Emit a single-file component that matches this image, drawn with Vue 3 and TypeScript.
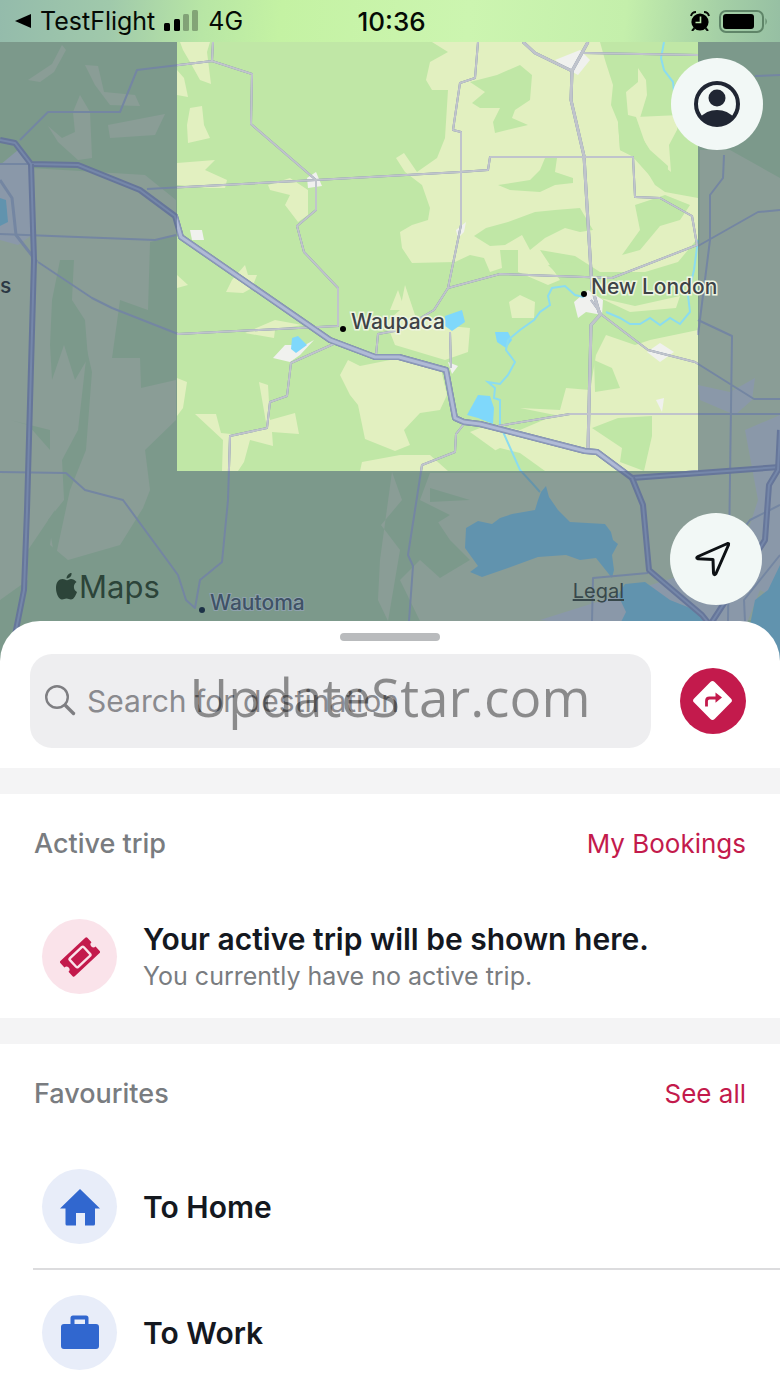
<script setup lang="ts">
type Road = { d: string; w: number; motorway?: boolean }

const green = [
  '470,82 497,75 520,65 532,75 530,100 515,110 512,118 528,125 495,133 493,122 500,108 480,108 472,103 485,92',
  '498,185 530,180 540,170 545,158 557,158 555,172 573,178 573,183 555,185 540,192 510,190',
  '486,228 508,222 535,212 555,210 580,208 593,230 580,232 565,228 545,238 530,250 522,235 505,245 490,246 474,236',
  '635,205 665,195 690,205 680,220 660,226 640,250 622,255 640,230',
  '548,265 580,262 585,275 560,277',
  '618,122 632,122 650,150 668,166 667,192 650,176 632,156 620,150',
]

const yellow = [
  '180,42 210,42 207,52 211,84 200,80 190,62 183,50',
  '177,70 184,78 188,97 177,95',
  '190,108 202,106 204,125 210,138 188,143 187,125',
  '177,163 215,160 205,170 227,180 225,188 210,188 177,185',
  '268,185 290,178 308,190 308,215 298,222 285,205 290,195 270,190',
  '177,275 188,285 177,288',
  '226,292 232,280 245,265 248,275 257,275 252,288 243,293',
  '390,310 398,290 405,310',
  '245,333 275,320 302,325 275,330 274,338',
  '177,378 187,382 183,408 177,416',
  '195,414 216,414 221,433 240,435 267,428 259,382 268,385 270,420 295,413 299,434 272,432 273,446 250,440 244,462 238,471 222,471 223,440',
  '432,42 600,42 605,60 613,85 611,105 618,122 620,150 640,160 655,185 665,192 698,198 698,238 678,262 645,272 600,272 575,256 540,250 560,280 548,285 518,272 518,250 500,250 502,268 490,272 484,258 470,255 455,262 412,263 402,248 400,232 412,225 428,220 430,208 422,185 405,172 396,158 404,153 417,172 437,158 445,138 448,90 432,90 426,80 430,62 448,52',
  '638,68 646,80 647,95 640,118 628,115 626,92 638,82',
  '636,117 680,115 677,130 669,145 671,172 650,155 644,140',
  '386,322 400,310 405,285 415,315 440,325 470,328 468,352 445,360 395,345',
  '348,360 360,366 400,358 440,365 447,395 440,410 420,413 404,430 410,445 395,451 365,439 358,405 350,395 340,375',
  '362,462 400,455 430,455 448,471 360,471',
  '470,432 490,424 520,430 555,415 520,408 560,410 566,388 590,390 596,355 606,335 635,345 650,340 698,330 698,471 510,471 495,450',
  '509,302 520,295 535,302 534,318 512,318',
  '600,298 635,306 680,296 676,308 630,312',
]

const greenOver = [
  '594,360 612,368 620,388 595,392',
  '592,428 618,418 652,416 652,436 644,471 620,462 622,448',
  '480,458 500,448 520,453 545,471 470,471',
]

const meadow = [
  '48,126 58,142 78,160 92,158 90,112 80,95 73,112 75,132 62,138',
  '28,80 52,64 62,45 66,50 54,72 40,82',
  '85,65 98,66 104,92 135,95 140,106 110,105 95,85',
  '108,125 165,114 155,135 110,138',
  '30,168 145,175 176,200 176,235 150,242 148,310 120,300 112,358 140,358 141,388 176,380 176,420 145,450 150,490 143,508 120,545 68,560 50,545 55,510 28,550 28,580 0,600 0,235 32,235',
  '700,150 730,150 780,178 780,620 590,621 520,621 420,621 400,580 410,540 450,515 420,500 430,473 698,473',
  '392,472 402,500 381,525 400,550 388,621 378,600 380,560',
]

const meadowGreen = [
  '60,260 74,260 72,300 85,320 88,358 75,380 64,345 52,380 50,345 52,300',
  '87,350 92,372 86,450 70,490 55,560 48,520 64,500 62,460 78,430',
  '10,420 50,430 50,450 28,425',
  '430,488 470,500 430,502',
  '400,520 430,510 450,540 470,560 440,578 420,560 400,580',
]

const city = [
  '0,165 18,150 30,165 32,235 18,245 0,240',
  '698,385 730,392 755,378 752,400 735,415 700,400',
  '745,430 780,415 780,600 750,585 745,540 758,500',
  '540,620 730,560 760,590 740,640 700,640',
]

const town = [
  '190,230 202,230 204,240 192,240',
  '307,178 316,172 322,186 308,188',
  '273,358 285,345 305,345 314,340 300,355 290,362',
  '555,60 580,50 590,60 578,75 565,68',
  '456,230 466,222 464,232 458,238',
  '574,302 588,290 603,300 602,315 586,312 578,318',
  '647,352 660,343 674,352 660,362',
  '448,362 458,366 452,374',
  '656,400 664,398 662,412',
]

const water = [
  '292,338 298,336 307,345 296,353 291,349',
  '445,316 462,310 465,322 452,331 445,326',
  '495,332 508,332 512,340 506,348 497,342',
  '467,415 478,395 490,396 494,408 493,424 478,418',
  '466,528 478,521 492,524 500,518 512,514 535,510 538,500 541,492 546,486 549,497 558,510 570,522 605,524 611,532 613,540 618,544 612,555 614,570 612,578 596,558 580,560 566,555 538,557 508,568 482,577 470,572 478,566 465,548',
  '618,595 625,584 645,582 670,600 700,612 712,640 612,640 626,612',
  '780,565 768,590 755,600 750,625 780,660',
  '0,198 6,200 8,222 0,226',
]

const streams = [
  'M664 42L661 58L664 70L673 82L674 92M698 240L694 270L688 295L690 312L680 324L670 318L660 325L650 318L640 324L630 324L620 318L606 312',
  'M584 297L575 295L565 286L552 288L548 296L550 305L540 312L534 320L520 330L508 340L506 350L515 362L508 375L500 384L488 382L495 388L494 398L500 400L500 425L512 452L520 470L532 483L540 492',
]

const roads: Road[] = [
  { w: 2, d: 'M20 140L48 112L120 112L137 70L212 61L213 42M212 61L252 74L251 124L316 180L316 210L297 226L304 252L338 288L338 326L178 334L112 308L92 298L38 262' },
  { w: 2, d: 'M147 189L316 180L460 172L488 170L490 157L633 157L635 197L660 198L692 216L697 245L612 278L500 274L448 288L434 310L400 330L378 334L376 355' },
  { w: 2, d: 'M478 42L475 78L460 83L453 130L461 132L461 225L448 288' },
  { w: 2, d: 'M0 234L155 240L176 235M0 164L30 164' },
  { w: 3, d: 'M0 180L12 198L16 235L37 262' },
  { w: 2, d: 'M584 53L698 55M755 76L780 75' },
  { w: 2, d: 'M338 342L291 363L287 396L270 402L267 428L230 436L228 500L222 562L200 580L195 608L186 600L178 575L123 500L85 490L66 473L0 472' },
  { w: 3, d: 'M523 42L535 53L572 71L588 42M572 71L571 100L584 156L592 288L600 315L591 325L588 448' },
  { w: 2, d: 'M591 300L602 315L648 350L695 362L754 399L780 399M698 320L732 336L728 621' },
  { w: 2, d: 'M450 332L451 368M498 426L570 414L780 414M464 424L456 434L455 452L422 465L408 555L413 566L409 621' },
  { w: 2, d: 'M724 155L723 178L710 195L710 240L698 335M698 246L758 212L780 210' },
  { w: 2, d: 'M592 621L593 578L648 573M780 505L750 520L735 540M745 621L744 600L780 555' },
  { w: 6, motorway: true, d: 'M0 140L15 143L31 164L78 165L140 190L175 216L181 237L330 340L375 357L399 357L446 370L455 418L464 422L480 424L585 451L597 452L632 478L780 467' },
  { w: 6, motorway: true, d: 'M31 164L34 260L27 510L24 590L14 640M632 478L643 505L649 570L702 615L710 625L765 540L769 485L778 470L780 430' },
]

const favourites = [
  { label: 'To Home', icon: 'home' },
  { label: 'To Work', icon: 'work' },
]
</script>

<template>
  <div class="screen">
    <header class="status">
      <div class="carrier">
        <svg class="back" viewBox="0 0 16 16" aria-hidden="true"><path d="M0 8L16 1V15Z" /></svg>
        <span>TestFlight</span>
        <svg class="signal" viewBox="0 0 35 22" aria-hidden="true">
          <rect x="0" y="13" width="6" height="8" rx="1.5" />
          <rect x="10" y="9" width="6" height="12" rx="1.5" />
          <rect x="19" y="4" width="6" height="17" rx="1.5" opacity=".28" />
          <rect x="28" y="0" width="6" height="21" rx="1.5" opacity=".28" />
        </svg>
        <span>4G</span>
      </div>
      <time class="clock">10:36</time>
      <div class="indicators">
        <svg class="alarm" viewBox="0 0 20 20" aria-hidden="true">
          <circle cx="10" cy="11" r="8.6" />
          <path d="M1 5Q2 1 6 1M14 1Q18 1 19 5M4.500 17L2 20M15.500 17L18 20" fill="none" stroke="#050a05" stroke-width="2" />
          <path d="M10.500 5.500V11.500H5.500" fill="none" stroke="#b9e4a9" stroke-width="1.600" />
        </svg>
        <svg class="battery" viewBox="0 0 49 23" aria-hidden="true">
          <rect x="1" y="1" width="43" height="21" rx="6" fill="none" stroke="#5f8568" stroke-width="2" />
          <rect x="4" y="4" width="31" height="15" rx="3" />
          <path d="M46.500 8Q49 11.500 46.500 15Z" fill="#5f8568" />
        </svg>
      </div>
    </header>

    <section class="map" aria-label="Map">
      <svg class="tiles" viewBox="0 42 780 624" aria-hidden="true">
        <defs>
          <clipPath id="focus"><rect x="177" y="42" width="521" height="429" /></clipPath>
        </defs>
        <rect y="42" width="780" height="624" fill="#c0e7a6" />
        <g fill="#e2f0c0"><polygon v-for="p in meadow" :key="p" :points="p" /></g>
        <g fill="#c0e7a6"><polygon v-for="p in meadowGreen" :key="p" :points="p" /></g>
        <g clip-path="url(#focus)">
          <rect x="177" y="42" width="521" height="429" fill="#c0e7a6" />
          <g fill="#e2f0c0"><polygon v-for="p in yellow" :key="p" :points="p" /></g>
          <g fill="#c0e7a6">
            <polygon v-for="p in green" :key="p" :points="p" />
            <polygon v-for="p in greenOver" :key="p" :points="p" />
          </g>
          <g fill="#f0f1ee"><polygon v-for="p in town" :key="p" :points="p" /></g>
        </g>
        <g fill="#e2e5ed"><polygon v-for="p in city" :key="p" :points="p" /></g>
        <g fill="#7fd8fb"><polygon v-for="p in water" :key="p" :points="p" /></g>
        <g fill="none" stroke="#8bdcf0" stroke-width="2"><path v-for="d in streams" :key="d" :d="d" /></g>
        <path d="M0 42H177V471H698V42H780V666H0Z" fill="#4d6378" fill-opacity=".59" />
        <g fill="none" stroke-linejoin="round">
          <g v-for="r in roads" :key="r.d">
            <path :d="r.d" :stroke="r.motorway ? '#66769a' : '#7486a2'" :stroke-width="r.w" />
            <path v-if="r.motorway" :d="r.d" stroke="#7587a9" stroke-width="2" />
          </g>
        </g>
        <g fill="none" stroke-linejoin="round" clip-path="url(#focus)">
          <g v-for="r in roads" :key="r.d">
            <path :d="r.d" :stroke="r.motorway ? '#8b98b9' : '#c0c4cc'" :stroke-width="r.w" />
            <path v-if="r.motorway" :d="r.d" stroke="#b0bbd6" stroke-width="3" />
          </g>
        </g>
        <g class="places">
          <circle cx="343" cy="329" r="3" /><text class="lit" x="351" y="329">Waupaca</text>
          <circle cx="584" cy="294" r="3" /><text class="lit" x="591" y="294">New London</text>
          <circle cx="202" cy="610" r="3" fill="#1d3247" /><text class="dim" x="210" y="610">Wautoma</text>
          <text class="edge" x="0" y="293">s</text>
        </g>
        <path transform="translate(56 573)" fill="#2c4439" d="M15 6C17 6 19 7 20.500 9C17 11 17 17 21 19C19.500 23 17.500 26.500 15 26.500C13 26.500 12.500 25.500 10.500 25.500C8.500 25.500 8 26.500 6 26.500C3 26.500 0 21 0 15C0 9 3 6 6.500 6C8.500 6 9.500 7.200 11 7.200C12.500 7.200 13.500 6 15 6ZM10.500 5.500C10.500 2.500 13 0 15.500 0C16 3 13.500 5.500 10.500 5.500Z" />
        <text class="brand" x="79" y="598">Maps</text>
      </svg>
      <a class="legal" href="#legal">Legal</a>
      <button class="round profile" type="button" aria-label="Profile">
        <svg viewBox="0 0 46 46" aria-hidden="true">
          <defs><clipPath id="face"><circle cx="23" cy="23" r="21" /></clipPath></defs>
          <circle cx="23" cy="23" r="21" fill="none" stroke="#202633" stroke-width="4" />
          <circle cx="23" cy="17" r="8.500" fill="#202633" />
          <path clip-path="url(#face)" d="M6 37Q12 29 23 29Q34 29 40 37L36 46H10Z" fill="#202633" />
        </svg>
      </button>
      <button class="round locate" type="button" aria-label="Show my location">
        <svg viewBox="0 0 46 46" aria-hidden="true">
          <path d="M34.500 7.500L5 20.500Q2.500 22 5 22.800L20 23.500L20.500 37Q21 40 23 37.500L35.500 9Q36 7 34.500 7.500Z" fill="none" stroke="#0d1114" stroke-width="3" stroke-linejoin="round" />
        </svg>
      </button>
    </section>

    <main class="sheet">
      <div class="grip"></div>
      <form class="search" @submit.prevent>
        <label class="field">
          <svg viewBox="0 0 32 32" aria-hidden="true">
            <circle cx="12" cy="12" r="10.800" fill="none" stroke="#7e7e82" stroke-width="2.400" />
            <path d="M20.500 20.500L28.500 28.500" stroke="#7e7e82" stroke-width="3.400" stroke-linecap="round" />
          </svg>
          <input type="text" placeholder="Search for destination" aria-label="Search for destination" />
        </label>
        <button class="route" type="button" aria-label="Directions">
          <svg viewBox="0 0 66 66" aria-hidden="true">
            <rect x="18" y="18" width="29" height="29" rx="3" transform="rotate(45 32.500 32.500)" fill="#fff" />
            <path d="M26.500 38.500V33Q26.500 30 29.500 30H37" fill="none" stroke="#c31a4c" stroke-width="2.800" />
            <path d="M35.500 24.500L42 29.500L35.500 34.800Z" fill="#c31a4c" />
          </svg>
        </button>
        <span class="watermark">UpdateStar.com</span>
      </form>

      <section class="group">
        <div class="heading">
          <h2>Active trip</h2>
          <a href="#bookings">My Bookings</a>
        </div>
        <div class="row">
          <span class="badge pink">
            <svg viewBox="0 0 40 40" aria-hidden="true">
              <g transform="rotate(-43 20 20)">
                <path d="M3 9.500H37Q38.500 9.500 38.500 11V17A3 3 0 0 0 38.500 23V29Q38.500 30.500 37 30.500H3Q1.500 30.500 1.500 29V23A3 3 0 0 0 1.500 17V11Q1.500 9.500 3 9.500Z" fill="#c31a4c" />
                <rect x="10.500" y="14" width="19" height="12" rx="1.500" fill="none" stroke="#fae3ea" stroke-width="2.400" />
              </g>
            </svg>
          </span>
          <div class="copy">
            <h3>Your active trip will be shown here.</h3>
            <p>You currently have no active trip.</p>
          </div>
        </div>
      </section>

      <section class="group">
        <div class="heading">
          <h2>Favourites</h2>
          <a href="#favourites">See all</a>
        </div>
        <ul>
          <li v-for="f in favourites" :key="f.label" class="row">
            <span class="badge blue">
              <svg viewBox="0 0 40 40" aria-hidden="true">
                <path v-if="f.icon === 'home'" d="M20 2L40 21.500H35V37Q35 38.500 33.500 38.500H25V26H16V38.500H7Q5.500 38.500 5.500 37V21.500H0Z" fill="#3167cf" />
                <path v-else fill-rule="evenodd" d="M10.500 11V5Q10.500 2.500 13 2.500H26Q28.500 2.500 28.500 5V11H36Q39 11 39 14V33Q39 36 36 36H4Q1 36 1 33V14Q1 11 4 11ZM14.500 6.500V11H25V6.500Z" fill="#3167cf" />
              </svg>
            </span>
            <h3>{{ f.label }}</h3>
          </li>
        </ul>
      </section>
    </main>
  </div>
</template>

<style>
body {
  background: #fff;
}
</style>

<style scoped>
.screen {
  font-family: Inter, "Liberation Sans", sans-serif;
  color: #14181f;
  overflow: hidden;
}
h2, h3, p, ul {
  margin: 0;
  padding: 0;
  list-style: none;
}
button {
  border: 0;
  padding: 0;
}
.status {
  display: grid;
  grid-template-columns: 1fr auto 1fr;
  align-items: center;
  height: 42px;
  padding: 0 12px 0 15px;
  font-size: 25px;
  color: #050a05;
  background: linear-gradient(95deg, #94bbab 0%, #a0c9ab 14%, #b8e6a5 26%, #c4f2a3 36%, #ccf5b0 60%, #c4efab 80%, #a5d0a6 92%, #96bfa3 100%);
}
.carrier, .indicators {
  display: flex;
  align-items: center;
  gap: 9px;
}
.indicators {
  justify-content: flex-end;
}
.back { width: 16px; height: 16px; }
.signal { width: 35px; height: 22px; }
.alarm { width: 20px; height: 20px; }
.battery { width: 49px; height: 23px; }
.clock {
  font-size: 26px;
  font-weight: 500;
}
.map {
  position: relative;
}
.tiles {
  display: block;
  width: 100%;
}
.places {
  font-size: 21px;
  font-weight: 500;
}
.lit {
  fill: #3e4347;
  stroke: #eef5e2;
  stroke-width: 3px;
  paint-order: stroke;
}
.dim {
  fill: #3f5266;
  stroke: #8fa2ae;
  stroke-width: 2px;
  paint-order: stroke;
}
.edge {
  fill: #2b3844;
}
.brand {
  font-size: 31px;
  font-weight: 400;
  fill: #2c4439;
}
.legal {
  position: absolute;
  right: 20%;
  bottom: 62px;
  font-size: 20px;
  line-height: 26px;
  color: #38484b;
}
.round {
  position: absolute;
  display: grid;
  place-items: center;
  width: 92px;
  height: 92px;
  border-radius: 50%;
  background: #f2f8f6;
}
.round svg {
  width: 46px;
  height: 46px;
}
.profile {
  top: 16px;
  right: 17px;
}
.locate {
  right: 18px;
  bottom: 61px;
}
.sheet {
  position: relative;
  margin-top: -45px;
  padding-top: 12px;
  border-radius: 40px 40px 0 0;
  background: #fff;
}
.grip {
  width: 100px;
  height: 8px;
  margin: 0 auto 13px;
  border-radius: 4px;
  background: #b9bbbd;
}
.search {
  position: relative;
  display: flex;
  align-items: center;
  gap: 29px;
  padding: 0 34px 20px 30px;
}
.field {
  display: flex;
  flex: 1;
  align-items: center;
  gap: 10px;
  height: 94px;
  padding: 0 15px;
  border-radius: 22px;
  background: #eeeef0;
}
.field svg {
  width: 32px;
  height: 32px;
}
.field input {
  flex: 1;
  min-width: 0;
  border: 0;
  padding: 0;
  background: none;
  font: inherit;
  font-size: 30px;
  color: #7e7e82;
}
.field input::placeholder {
  color: #8a8a8e;
  opacity: 1;
}
.route {
  width: 66px;
  height: 66px;
  border-radius: 50%;
  background: #c31a4c;
}
.watermark {
  position: absolute;
  inset: 0 0 30px;
  display: flex;
  align-items: center;
  justify-content: center;
  font-family: "Open Sans", sans-serif;
  font-size: 53px;
  color: rgba(0, 0, 0, 0.42);
  pointer-events: none;
}
.group {
  border-top: 26px solid #f4f4f5;
}
.heading {
  display: flex;
  align-items: center;
  justify-content: space-between;
  height: 98px;
  padding: 0 34px;
  font-size: 26px;
}
h2 {
  font-size: 27px;
  font-weight: 500;
  color: #797c80;
}
.heading a {
  color: #c31a4c;
  text-decoration: none;
}
.row {
  position: relative;
  display: flex;
  align-items: center;
  gap: 26px;
  padding: 27px 42px 24px;
}
.row + .row::before {
  content: "";
  position: absolute;
  top: 0;
  right: 0;
  left: 33px;
  height: 2px;
  background: #dcdcde;
}
.badge {
  display: grid;
  place-items: center;
  flex: none;
  width: 75px;
  height: 75px;
  border-radius: 50%;
}
.badge svg {
  width: 40px;
  height: 40px;
}
.pink { background: #fae3ea; }
.blue { background: #e8edf9; }
h3 {
  font-size: 30px;
  font-weight: 600;
  line-height: 40px;
}
p {
  font-size: 25px;
  line-height: 35px;
  color: #797c80;
}
</style>
